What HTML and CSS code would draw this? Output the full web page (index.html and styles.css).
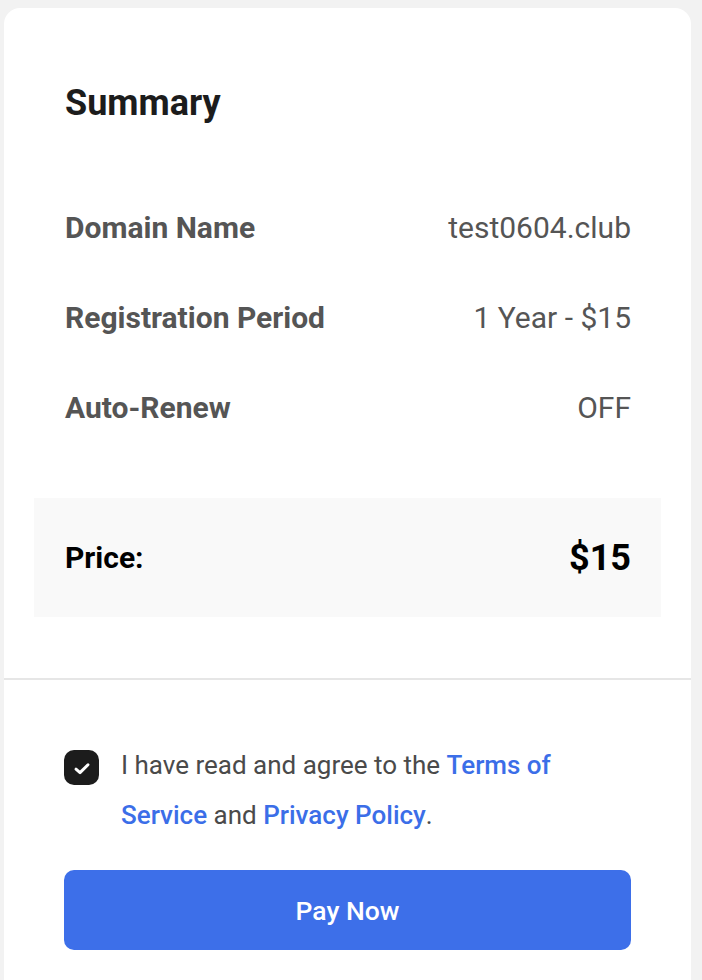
FILE: index.html
```html
<!DOCTYPE html>
<html lang="en">
<head>
<meta charset="utf-8">
<title>Summary</title>
<link rel="stylesheet" href="styles.css">
</head>
<body>
<div class="card">
  <section class="summary">
    <h1 class="title">Summary</h1>
    <div class="rows">
      <div class="row"><span class="label">Domain Name</span><span class="value">test0604.club</span></div>
      <div class="row"><span class="label">Registration Period</span><span class="value">1 Year - $15</span></div>
      <div class="row"><span class="label">Auto-Renew</span><span class="value">OFF</span></div>
    </div>
    <div class="price">
      <span class="price-label">Price:</span>
      <span class="price-value">$15</span>
    </div>
  </section>
  <section class="checkout">
    <div class="agree">
      <span class="checkbox">
        <svg width="20" height="20" viewBox="0 0 20 20" aria-hidden="true"><path d="M4 11.2 L8 14.6 L16 6.8" fill="none" stroke="#fff" stroke-width="3" stroke-linecap="round" stroke-linejoin="round"/></svg>
      </span>
      <p class="agree-text">I have read and agree to the <a href="#" class="link">Terms of Service</a> and <a href="#" class="link">Privacy Policy</a>.</p>
    </div>
    <button class="pay" type="button">Pay Now</button>
  </section>
</div>
</body>
</html>
```
FILE: styles.css
```css
html, body {
  margin: 0;
  padding: 0;
}
body {
  background: #f2f2f2;
  font-family: Roboto, "Liberation Sans", Arial, sans-serif;
  padding: 8px 11px 0 4px;
  height: 980px;
  box-sizing: border-box;
  overflow: hidden;
}
.card {
  background: #ffffff;
  border-radius: 16px 16px 0 0;
  height: 972px;
  width: 687px;
}
.summary {
  padding-top: 75px;
  padding-bottom: 61px;
  border-bottom: 2px solid #e6e6e6;
}
.title {
  margin: 0 60px 0 61px;
  font-size: 36px;
  line-height: 40px;
  font-weight: 700;
  color: #1c1c1c;
}
.rows {
  margin: 59px 60px 46px 61px;
}
.row {
  height: 90px;
  display: flex;
  align-items: center;
  justify-content: space-between;
  font-size: 30px;
  color: #555555;
}
.label {
  font-weight: 700;
}
.value {
  font-weight: 400;
}
.price {
  margin: 0 30px;
  height: 119px;
  background: #f9f9f9;
  display: flex;
  align-items: center;
  justify-content: space-between;
  padding: 0 30px 0 31px;
  color: #000;
  font-weight: 700;
}
.price-label {
  font-size: 30px;
}
.price-value {
  font-size: 36px;
}
.checkout {
  padding: 60px 60px 0 60px;
}
.agree {
  display: flex;
  align-items: flex-start;
  gap: 22px;
}
.checkbox {
  flex: none;
  width: 35px;
  height: 35px;
  margin-top: 10px;
  border-radius: 10px;
  background: #1c1c1c;
  display: flex;
  align-items: center;
  justify-content: center;
}
.checkbox svg {
  display: block;
}
.agree-text {
  margin: 0;
  font-size: 26px;
  line-height: 50px;
  color: #4a4a4a;
}
.link {
  color: #3b6ee8;
  text-decoration: none;
  font-weight: 500;
}
.pay {
  display: block;
  width: 100%;
  height: 80px;
  margin-top: 30px;
  border: none;
  border-radius: 10px;
  background: #3d6fe9;
  color: #fff;
  font-family: Roboto, "Liberation Sans", Arial, sans-serif;
  font-size: 26.5px;
  font-weight: 500;
  cursor: pointer;
}
```
